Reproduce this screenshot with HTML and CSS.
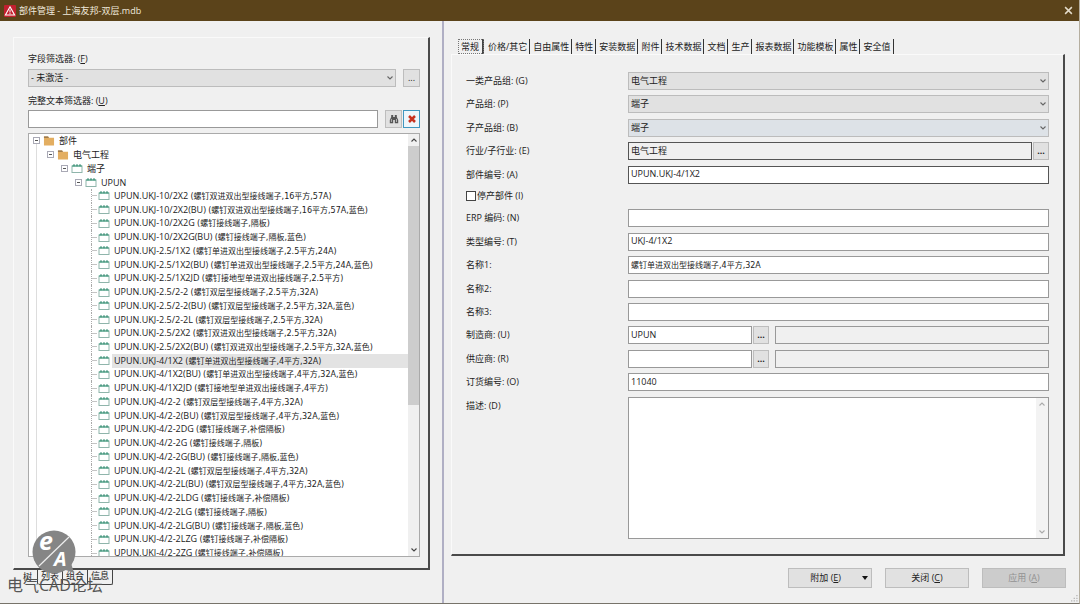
FILE: index.html
```html
<!DOCTYPE html>
<html lang="zh-CN">
<head>
<meta charset="utf-8">
<title>部件管理 - 上海友邦-双层.mdb</title>
<link rel="stylesheet" href="styles.css">
</head>
<body>
<svg class="defs" aria-hidden="true">
  <symbol id="chev" viewBox="0 0 8 6"><path d="M1.5 1.5 4 4 6.5 1.5" fill="none" stroke="currentColor" stroke-width="1.1"/></symbol>
  <symbol id="folder" viewBox="0 0 12 12"><path d="M.5 1.5h4.5l1 1.5h5.5v8.5H.5z" fill="#e3ae61"/><path d="M.5 1.5h4.5l1 1.5H.5z" fill="#8a6a45"/></symbol>
  <symbol id="term" viewBox="0 0 12 10"><rect x="1" y="2.5" width="10" height="6.5" fill="#fff" stroke="#8fb5ab"/><path d="M1 2.5h10" stroke="#3f9c7f"/><path d="M3 .8v2M6 .8v2M9 .8v2" stroke="#3b8f75" stroke-width="1.3"/></symbol>
</svg>
<div class="window">
  <header class="titlebar">
    <svg class="logo" viewBox="0 0 12 12"><rect width="12" height="12" rx="1" fill="#c3202f"/><path d="M6 1.8 10.6 10H1.4z" fill="none" stroke="#fff" stroke-width="1.1"/><path d="M6 4.5v3M6 8.2v1" stroke="#fff"/></svg>
    <h1 class="caption">部件管理 - 上海友邦-双层.mdb</h1>
    <button class="close" aria-label="关闭窗口"><svg viewBox="0 0 8 8"><path d="M1 1 7 7M7 1 1 7" stroke="#e4dccb" stroke-width="1.3"/></svg></button>
  </header>
  <div class="panes">
    <section class="left">
      <div class="group filters">
        <label class="flabel" for="ff">字段筛选器: (<u>F</u>)</label>
        <div class="frow">
          <span class="combo"><select id="ff"><option>- 未激活 -</option></select><svg><use href="#chev"/></svg></span>
          <button class="btn sq spaced">...</button>
        </div>
        <label class="flabel second" for="ft">完整文本筛选器: (<u>U</u>)</label>
        <div class="frow">
          <input class="field" id="ft">
          <button class="btn sq spaced" aria-label="查找"><svg class="ic" viewBox="0 0 10 10"><path d="M2.2 1h2v2h1.6V1h2v2l1.4 3v3.2H5.8V6H4.2v3.2H.8V6l1.4-3z" fill="#555"/><path d="M2.4 5v3M7.5 5v3" stroke="#ccc" stroke-width=".8"/></svg></button>
          <button class="btn sq clear" aria-label="清除"><svg class="ic" viewBox="0 0 10 10"><path d="M2 2 8 8M8 2 2 8" stroke="#c8321f" stroke-width="2.5"/></svg></button>
        </div>
        <div class="treebox">
          <ul class="tree">
            <li class="l0"><i class="exp"></i><svg><use href="#folder"/></svg><span>部件</span></li>
            <li class="l1"><i class="exp"></i><svg><use href="#folder"/></svg><span>电气工程</span></li>
            <li class="l2"><i class="exp"></i><svg><use href="#term"/></svg><span>端子</span></li>
            <li class="l3"><i class="exp"></i><svg><use href="#term"/></svg><span>UPUN</span></li>
            <li><i></i><svg><use href="#term"/></svg><span>UPUN.UKJ-10/2X2 <small>(螺钉双进双出型接线端子,16平方,57A)</small></span></li>
            <li><i></i><svg><use href="#term"/></svg><span>UPUN.UKJ-10/2X2(BU) <small>(螺钉双进双出型接线端子,16平方,57A,蓝色)</small></span></li>
            <li><i></i><svg><use href="#term"/></svg><span>UPUN.UKJ-10/2X2G <small>(螺钉接线端子,隔板)</small></span></li>
            <li><i></i><svg><use href="#term"/></svg><span>UPUN.UKJ-10/2X2G(BU) <small>(螺钉接线端子,隔板,蓝色)</small></span></li>
            <li><i></i><svg><use href="#term"/></svg><span>UPUN.UKJ-2.5/1X2 <small>(螺钉单进双出型接线端子,2.5平方,24A)</small></span></li>
            <li><i></i><svg><use href="#term"/></svg><span>UPUN.UKJ-2.5/1X2(BU) <small>(螺钉单进双出型接线端子,2.5平方,24A,蓝色)</small></span></li>
            <li><i></i><svg><use href="#term"/></svg><span>UPUN.UKJ-2.5/1X2JD <small>(螺钉接地型单进双出接线端子,2.5平方)</small></span></li>
            <li><i></i><svg><use href="#term"/></svg><span>UPUN.UKJ-2.5/2-2 <small>(螺钉双层型接线端子,2.5平方,32A)</small></span></li>
            <li><i></i><svg><use href="#term"/></svg><span>UPUN.UKJ-2.5/2-2(BU) <small>(螺钉双层型接线端子,2.5平方,32A,蓝色)</small></span></li>
            <li><i></i><svg><use href="#term"/></svg><span>UPUN.UKJ-2.5/2-2L <small>(螺钉双层型接线端子,2.5平方,32A)</small></span></li>
            <li><i></i><svg><use href="#term"/></svg><span>UPUN.UKJ-2.5/2X2 <small>(螺钉双进双出型接线端子,2.5平方,32A)</small></span></li>
            <li><i></i><svg><use href="#term"/></svg><span>UPUN.UKJ-2.5/2X2(BU) <small>(螺钉双进双出型接线端子,2.5平方,32A,蓝色)</small></span></li>
            <li class="selected"><i></i><svg><use href="#term"/></svg><span>UPUN.UKJ-4/1X2 <small>(螺钉单进双出型接线端子,4平方,32A)</small></span></li>
            <li><i></i><svg><use href="#term"/></svg><span>UPUN.UKJ-4/1X2(BU) <small>(螺钉单进双出型接线端子,4平方,32A,蓝色)</small></span></li>
            <li><i></i><svg><use href="#term"/></svg><span>UPUN.UKJ-4/1X2JD <small>(螺钉接地型单进双出接线端子,4平方)</small></span></li>
            <li><i></i><svg><use href="#term"/></svg><span>UPUN.UKJ-4/2-2 <small>(螺钉双层型接线端子,4平方,32A)</small></span></li>
            <li><i></i><svg><use href="#term"/></svg><span>UPUN.UKJ-4/2-2(BU) <small>(螺钉双层型接线端子,4平方,32A,蓝色)</small></span></li>
            <li><i></i><svg><use href="#term"/></svg><span>UPUN.UKJ-4/2-2DG <small>(螺钉接线端子,补偿隔板)</small></span></li>
            <li><i></i><svg><use href="#term"/></svg><span>UPUN.UKJ-4/2-2G <small>(螺钉接线端子,隔板)</small></span></li>
            <li><i></i><svg><use href="#term"/></svg><span>UPUN.UKJ-4/2-2G(BU) <small>(螺钉接线端子,隔板,蓝色)</small></span></li>
            <li><i></i><svg><use href="#term"/></svg><span>UPUN.UKJ-4/2-2L <small>(螺钉双层型接线端子,4平方,32A)</small></span></li>
            <li><i></i><svg><use href="#term"/></svg><span>UPUN.UKJ-4/2-2L(BU) <small>(螺钉双层型接线端子,4平方,32A,蓝色)</small></span></li>
            <li><i></i><svg><use href="#term"/></svg><span>UPUN.UKJ-4/2-2LDG <small>(螺钉接线端子,补偿隔板)</small></span></li>
            <li><i></i><svg><use href="#term"/></svg><span>UPUN.UKJ-4/2-2LG <small>(螺钉接线端子,隔板)</small></span></li>
            <li><i></i><svg><use href="#term"/></svg><span>UPUN.UKJ-4/2-2LG(BU) <small>(螺钉接线端子,隔板,蓝色)</small></span></li>
            <li><i></i><svg><use href="#term"/></svg><span>UPUN.UKJ-4/2-2LZG <small>(螺钉接线端子,补偿隔板)</small></span></li>
            <li><i></i><svg><use href="#term"/></svg><span>UPUN.UKJ-4/2-2ZG <small>(螺钉接线端子,补偿隔板)</small></span></li>
          </ul>
          <div class="scroll"><svg class="up"><use href="#chev"/></svg><div class="track"><div class="thumb"></div></div><svg><use href="#chev"/></svg></div>
        </div>
      </div>
      <nav class="btabs"><button class="active">树</button><button>列表</button><button>组合</button><button>信息</button></nav>
      <div class="mark">
        <svg viewBox="0 0 44 44"><circle cx="22" cy="22" r="21.5" fill="#858585"/><path d="M31 39 42 43 39 33z" fill="#858585"/><path d="M7 36 37 7" stroke="#eee" stroke-width="1.2"/><text x="7" y="20" class="me">e</text><text x="22" y="36" class="ma">A</text></svg>
        <span>电气CAD论坛</span>
      </div>
    </section>
    <section class="right">
      <nav class="tabs"><button class="active">常规</button><button>价格/其它</button><button>自由属性</button><button>特性</button><button>安装数据</button><button>附件</button><button>技术数据</button><button>文档</button><button>生产</button><button>报表数据</button><button>功能模板</button><button>属性</button><button>安全值</button></nav>
      <form class="group form">
        <label for="g">一类产品组: (G)</label><span class="combo"><select id="g"><option>电气工程</option></select><svg><use href="#chev"/></svg></span>
        <label for="p">产品组: (P)</label><span class="combo"><select id="p"><option>端子</option></select><svg><use href="#chev"/></svg></span>
        <label for="b">子产品组: (B)</label><span class="combo hot"><select id="b"><option>端子</option></select><svg><use href="#chev"/></svg></span>
        <label for="e">行业/子行业: (E)</label><div class="pair"><input class="field dark ro" id="e" value="电气工程" readonly><button type="button" class="btn sq dots">...</button></div>
        <label for="a">部件编号: (A)</label><input class="field dark" id="a" value="UPUN.UKJ-4/1X2">
        <label class="check"><input type="checkbox">停产部件 (I)</label>
        <label for="n">ERP 编码: (N)</label><input class="field" id="n">
        <label for="t">类型编号: (T)</label><input class="field" id="t" value="UKJ-4/1X2">
        <label for="n1">名称1:</label><input class="field desc" id="n1" value="螺钉单进双出型接线端子,4平方,32A">
        <label for="n2">名称2:</label><input class="field" id="n2">
        <label for="n3">名称3:</label><input class="field" id="n3">
        <label for="u">制造商: (U)</label><div class="pair"><input class="field short" id="u" value="UPUN"><button type="button" class="btn sq dots">...</button><input class="field ro wide" aria-label="制造商名称" readonly></div>
        <label for="r">供应商: (R)</label><div class="pair"><input class="field short" id="r"><button type="button" class="btn sq dots">...</button><input class="field ro wide" aria-label="供应商名称" readonly></div>
        <label for="o">订货编号: (O)</label><input class="field" id="o" value="11040">
        <label class="top" for="d">描述: (D)</label><div class="area"><textarea id="d"></textarea><div class="ascroll"><svg class="up"><use href="#chev"/></svg><svg><use href="#chev"/></svg></div></div>
      </form>
      <footer class="actions">
        <button class="btn big split"><span>附加 (<u>E</u>)</span><i class="caret"></i></button>
        <button class="btn big">关闭 (<u>C</u>)</button>
        <button class="btn big" disabled>应用 (<u>A</u>)</button>
      </footer>
      <svg class="grip" viewBox="0 0 8 8"><path d="M6 0h1.5v1.5H6zM3 3h1.5v1.5H3zM6 3h1.5v1.5H6zM0 6h1.5v1.5H0zM3 6h1.5v1.5H3zM6 6h1.5v1.5H6z" fill="#b5b5b5"/></svg>
    </section>
  </div>
</div>
</body>
</html>
```

FILE: styles.css
```css
* { box-sizing: border-box; }
body { margin: 0; }
body, button, input, select, textarea {
  font: 9px/12px "Open Sans", "Noto Sans CJK SC", sans-serif;
  color: #222;
}
button { padding: 0; margin: 0; }
.defs { position: absolute; width: 0; height: 0; }
.window {
  min-height: 100vh;
  display: flex;
  flex-direction: column;
  background: #f0f0f0;
  border-bottom: 1px solid #77736a;
  border-right: 1px solid #b5ae9f;
}
.titlebar {
  height: 21px;
  display: flex;
  align-items: center;
  padding: 0 6px 0 4px;
  background: #5b431a;
}
.logo { width: 12px; height: 12px; margin-right: 3px; }
.caption { flex: 1; margin: 0; font-size: 9px; font-weight: 400; color: #f0eadd; }
.close { border: 0; background: none; width: 9px; height: 9px; display: flex; }
.close svg { width: 9px; height: 9px; }
.panes { flex: 1; display: grid; grid-template-columns: minmax(0, 444fr) minmax(0, 635fr); }
.left, .right { position: relative; display: flex; flex-direction: column; }
.left { padding: 16px 12px 18px 13px; border-right: 2px solid #b0afc4; }
.right { padding: 18px 13px 15px 7px; }
.group {
  flex: 1;
  border: 1px solid #fafafa;
  border-right: 2px solid #4a4a4a;
  border-bottom: 2px solid #4a4a4a;
}
.filters { display: flex; flex-direction: column; padding: 15px 8px 11px 14px; }
.flabel { margin-bottom: 4px; }
.flabel.second { margin: 8px 0 3px; }
.frow { display: flex; height: 18px; }
.combo { position: relative; flex: 1; height: 18px; min-width: 0; }
.combo select {
  appearance: none;
  display: block;
  width: 100%;
  height: 18px;
  padding: 0 14px 0 2px;
  border: 1px solid #bcbcbc;
  border-radius: 0;
  background: #e1e1e1;
}
.combo.hot select { background: #dde2e7; }
.combo svg { position: absolute; right: 2px; top: 6px; width: 8px; height: 6px; color: #666; pointer-events: none; }
.field {
  flex: 1;
  min-width: 0;
  width: 100%;
  height: 18px;
  padding: 0 2px 2px;
  border: 1px solid #999;
  background: #fff;
}
.field.dark { border-color: #555; }
.field.ro { background: #f0f0f0; }
.desc, .tree small { font-family: "DejaVu Sans", "Noto Sans CJK SC", sans-serif; font-size: 8px; }
.btn { border: 1px solid #bdbdbd; background: #e1e1e1; }
.sq { width: 17px; height: 18px; display: flex; align-items: center; justify-content: center; }
.spaced { margin-left: 7px; }
.clear { margin-left: 1px; border-color: #3f97c0; background: #eef6fb; }
.ic { width: 10px; height: 10px; }
.treebox { flex: 1 0 0; min-height: 0; margin-top: 5px; display: flex; overflow: hidden; border: 1px solid #aaa; background: #fff; }
.tree {
  flex: 1;
  min-width: 0;
  height: calc(100% + 4px);
  margin: 0;
  padding: 0;
  list-style: none;
  display: grid;
  grid-template-rows: repeat(31, minmax(0, 1fr));
  background: linear-gradient(#ddd, #ddd) 7px 10px / 1px 100% no-repeat;
}
.tree li { display: flex; align-items: center; padding-left: 62px; white-space: nowrap; min-width: 0; }
.tree .l0 { padding-left: 4px; }
.tree .l1 { padding-left: 18px; }
.tree .l2 { padding-left: 32px; }
.tree .l3 { padding-left: 46px; }
.tree i { width: 6px; height: 100%; margin-right: 1px; border-left: 1px dotted #aaa; background: linear-gradient(#c4c4c4, #c4c4c4) 0 50% / 6px 1px no-repeat; }
.tree .exp { width: 7px; height: 7px; margin-right: 3px; border: 1px solid #a9a9b5; background: linear-gradient(#555, #555) 1px 2px / 3px 1px no-repeat #fff; }
.tree svg { width: 12px; height: 11px; flex: none; }
.tree span { flex: 1; margin-left: 2px; padding-left: 2px; line-height: 13px; }
.tree small { line-height: 12px; }
.tree .selected span { background: #e3e3e3; }
.scroll { width: 11px; display: flex; flex-direction: column; align-items: center; background: #f0f0f0; color: #444; }
.scroll svg { width: 8px; height: 6px; margin: 3px 0; }
.up { transform: rotate(180deg); }
.track { flex: 1; width: 100%; }
.thumb { height: 65%; background: #cdcdcd; }
.btabs { display: flex; padding-left: 5px; height: 15px; }
.btabs button {
  width: 25px;
  height: 15px;
  padding-bottom: 2px;
  border: 0 solid #444;
  border-width: 0 1px 1px 0;
  border-radius: 0 0 2px 2px;
  background: #f0f0f0;
}
.btabs .active { width: 20px; border-bottom: 0; }
/* Forum watermark lying over the tree and the bottom tabs */
.mark { position: absolute; left: 7px; bottom: 9px; color: #555; font-size: 16px; line-height: 18px; white-space: nowrap; }
.mark svg { display: block; width: 44px; height: 44px; margin: 0 0 2px 25px; overflow: visible; }
.me, .ma { fill: #fff; font: italic 700 25px "Open Sans", sans-serif; }
.ma { font-size: 20px; }
.tabs { display: flex; height: 15px; padding-left: 7px; }
.tabs button { height: 15px; padding: 0 2px 0 3px; border: 0; border-right: 1px solid #333; background: none; white-space: nowrap; }
.tabs .active { padding: 0 3px; margin-right: 1px; outline: 1px dotted #777; outline-offset: -1px; border: 0; border-right: 2px solid #444; }
.form {
  display: grid;
  grid-template-columns: 162px minmax(0, 1fr);
  grid-template-rows: repeat(5, 47fr) 40fr repeat(8, 47fr) 292fr;
  align-items: center;
  margin-right: 1px;
  padding: 14px;
}
.check { grid-column: 1 / -1; display: flex; align-items: center; }
.check input { appearance: none; width: 10px; height: 10px; margin: 0 1px 0 0; border: 1px solid #444; background: #fff; }
.pair { display: flex; }
.dots { margin-left: 1px; width: 16px; font-weight: 700; }
.short { flex: 0 0 124px; }
.wide { margin-left: 6px; }
.top { align-self: start; padding-top: 6px; }
.area { align-self: stretch; display: flex; margin: 3px 0 1px; border: 1px solid #999; background: #fff; }
.area textarea { flex: 1; min-width: 0; border: 0; resize: none; background: none; }
.ascroll { width: 12px; display: flex; flex-direction: column; justify-content: space-between; align-items: center; padding: 3px 0; background: #f3f3f3; color: #aaa; }
.ascroll svg { width: 8px; height: 6px; }
.actions { display: flex; justify-content: flex-end; gap: 13px; margin: 12px 0 0; }
.big { width: 84px; height: 20px; }
.split { display: flex; align-items: center; justify-content: flex-end; padding-right: 3px; gap: 21px; }
.caret { border: 3px solid transparent; border-top: 4px solid #111; border-bottom: 0; }
.big:disabled { background: #cccccc; color: #929292; }
.grip { position: absolute; right: 1px; bottom: 1px; width: 7px; height: 7px; }
```
